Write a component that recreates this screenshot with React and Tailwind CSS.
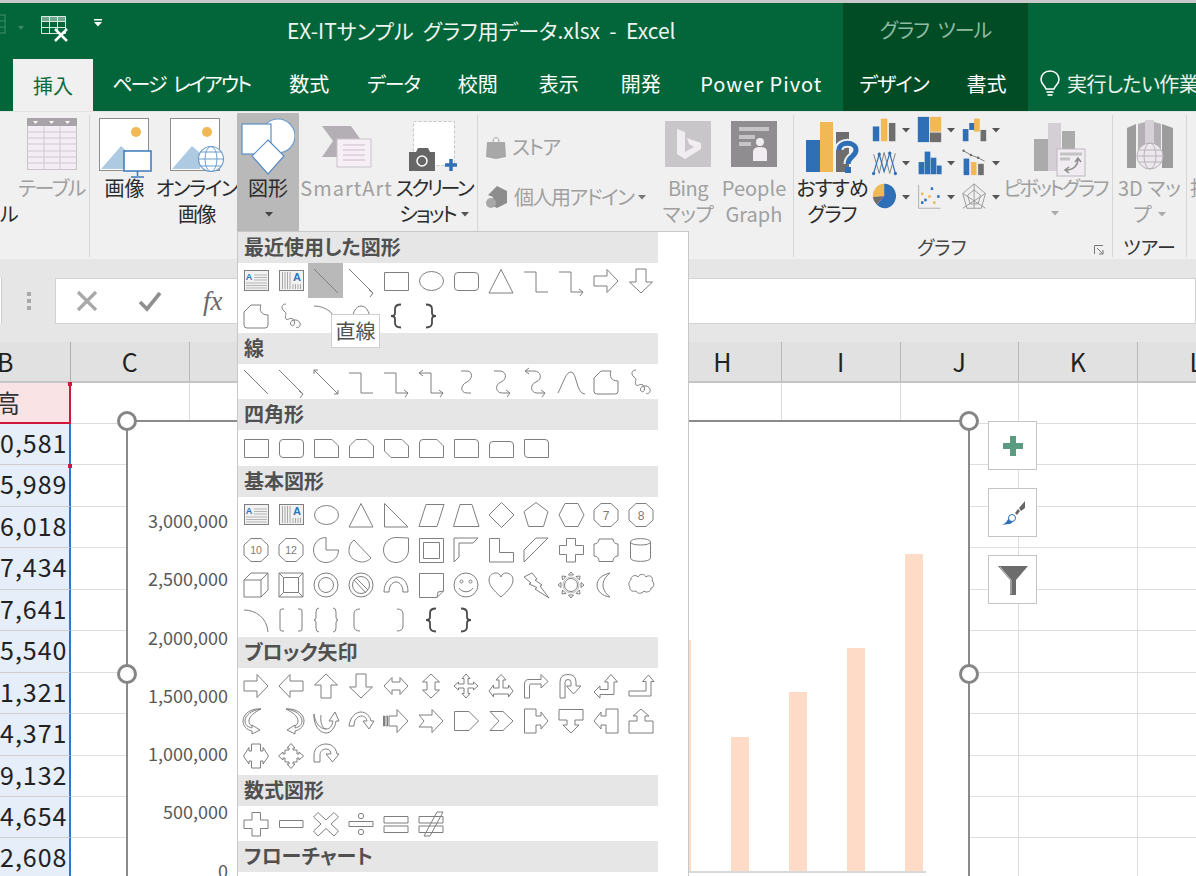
import React from "react";

const S = "#7f7f7f";
const P = (d, extra) => (
  <>
    <path d={d} fill="none" stroke={S} strokeWidth="1" strokeLinejoin="miter" />
    {extra}
  </>
);
const ah = (x, y) => `M${x - 4} ${y - 3}L${x} ${y}L${x - 3} ${y + 4}`;
const T = ({ x = 13, y = 17, s = 11, c = "#7a7a7a", w = 400, ch }) => (
  <text x={x} y={y} fontSize={s} fill={c} fontWeight={w} textAnchor="middle" fontFamily="'Liberation Sans',sans-serif">{ch}</text>
);

const shapes = {
  textH: (
    <>
      <rect x="1.500" y="2.500" width="24" height="20" fill="#f2f2f2" stroke={S} />
      <T x={6} y={12} s={9} c="#2e75c0" w={700} ch="A" />
      <path d="M11 7h13M11 9.500h13M11 12h13M3 15h21M3 17.500h21M3 20h21" stroke="#b5b5b5" fill="none" />
    </>
  ),
  textV: (
    <>
      <rect x="1.500" y="2.500" width="24" height="20" fill="#f2f2f2" stroke={S} />
      <path d="M4.500 4v17M7 4v17M9.500 4v17M12 4v17M15 16v5M17.500 16v5M20 16v5M22.500 16v5" stroke="#a8a8a8" fill="none" />
      <T x={19} y={13} s={11} c="#2e75c0" w={700} ch="A" />
    </>
  ),
  line: P("M1 1L25 25"),
  arrow: P(`M1 1L25 25${ah(25, 25)}`),
  dbl: P("M1 1L25 25M21 25H25V21M1 5V1H5"),
  rect: P("M1.500 4.500H25.500V22.500H1.500Z"),
  ellipse: P("M1.500 13A12 9.500 0 1 0 25.500 13A12 9.500 0 1 0 1.500 13Z"),
  round: P("M5 4.500H22Q25.500 4.500 25.500 8V19Q25.500 22.500 22 22.500H5Q1.500 22.500 1.500 19V8Q1.500 4.500 5 4.500Z"),
  tri: P("M13 1.500L25 25H1Z"),
  elbow: P("M1 4H13V24H25"),
  elbowA: P(`M1 4H13V24H25${ah(25, 24)}`),
  elbowD: P(`M5 1L1 4L5 7M1 4H13V24H25${ah(25, 24)}`),
  curve: P("M8 2H14C20 2 20 10 14 13C7 16 7 24 14 24H18"),
  curveA: P(`M6 2H12C18 2 20 10 13 13C6 16 8 24 14 24H22${ah(22, 24)}`),
  curveD: P(`M6 -1L2 2L6 5M2 2H11C18 2 20 10 13 13C6 16 8 24 14 24H22${ah(22, 24)}`),
  bez: P("M0 24C6 12 8 3 13 3C19 3 18 25 27 25"),
  free: P("M1 9L8 2H18C16 7 18 12 25 12V22Q25 25 22 25H4Q1 25 1 22Z"),
  scrib: P("M8 1C3 1 3 6 6 8C10 10 6 13 8 16C9 18 12 14 15 16C18 19 16 25 13 22C10 18 19 14 22 20C23 23 20 26 18 24"),
  arc: P("M1 3C13 3 24 11 25 25"),
  arch: P("M4 24C3 10 8 3 13 3C19 3 23 10 22 24"),
  snip1: P("M1.500 4.500H19L25.500 11V22.500H1.500Z"),
  snip2: P("M8 4.500H19L25.500 11V22.500H1.500V11Z"),
  snipD: P("M1.500 4.500H19L25.500 11V22.500H8L1.500 16Z"),
  rsnip: P("M5 4.500H19L25.500 11V22.500H1.500V8Q1.500 4.500 5 4.500Z"),
  round1: P("M1.500 4.500H22Q25.500 4.500 25.500 8V22.500H1.500Z"),
  round2: P("M5 6.500H22Q25.500 6.500 25.500 10V22.500H1.500V10Q1.500 6.500 5 6.500Z"),
  roundD: P("M1.500 4.500H22Q25.500 4.500 25.500 8V22.500H5Q1.500 22.500 1.500 19Z"),
  rtri: P("M1.500 1.500V25H25Z"),
  para: P("M1 24.500L8 2.500H26L19 24.500Z"),
  trap: P("M7 2.500H19L26 24.500H0.500Z"),
  dia: P("M13.500 0.500L26 13L13.500 25.500L1 13Z"),
  pent: P("M13 0.500L25 9.500L20.500 24.500H5.500L1 9.500Z"),
  hex: P("M7 1.500H20L26 13L20 24.500H7L1 13Z"),
  hept: P("M8 1.500H18L25 8V18L18 24.500H8L1 18V8Z", <T y={17.500} s={12} ch="7" />),
  oct: P("M8 1.500H18L25 8V18L18 24.500H8L1 18V8Z", <T y={17.500} s={12} ch="8" />),
  dec: P("M8 1.500H18L25 8V18L18 24.500H8L1 18V8Z", <T y={17} s={10.500} ch="10" />),
  dodec: P("M8 1.500H18L25 8V18L18 24.500H8L1 18V8Z", <T y={17} s={10.500} ch="12" />),
  pie: P("M13 13H25.500C25.500 21 19 25.500 13 25.500C6 25.500 0.500 20 0.500 13C0.500 6 6 0.500 13 0.500Z"),
  chord: P("M6 3L23 21C19 25 14 26 9 24C3 22 0.500 17 1 13C1 9 3 5 6 3Z"),
  tear: P("M25.500 1V13C25.500 20 19.500 25.500 13 25.500C6 25.500 0.500 20 0.500 13C0.500 6 6 0.500 13 0.500Z"),
  frame: P("M1.500 1.500H25.500V25.500H1.500ZM5.500 5.500H21.500V21.500H5.500Z"),
  half: P("M1 1H25L20 6H6V20L1 25Z"),
  lshape: P("M1.500 1.500H11.500V15.500H25.500V25H1.500Z"),
  diag: P("M1 25V13L13 1H25Z"),
  cross: P("M8.500 1.500H17.500V8.500H25.500V17.500H17.500V25H8.500V17.500H1.500V8.500H8.500Z"),
  plaque: P("M6 2H20C20 5 22 7 25 7V19C22 19 20 21 20 24.500H6C6 21 4 19 1 19V7C4 7 6 5 6 2Z"),
  can: P("M2.500 5C2.500 0.500 22.500 0.500 22.500 5V21C22.500 25.500 2.500 25.500 2.500 21ZM2.500 5C2.500 9 22.500 9 22.500 5"),
  cube: P("M1 8L8 1H25V18L18 25H1ZM1 8H18V25M18 8L25 1"),
  bevel: P("M1 1H25V25H1ZM5.500 5.500H20.500V20.500H5.500ZM1 1L5.500 5.500M25 1L20.500 5.500M1 25L5.500 20.500M25 25L20.500 20.500"),
  donut: (
    <>
      <circle cx="13" cy="13" r="12" fill="none" stroke={S} />
      <circle cx="13" cy="13" r="7.500" fill="none" stroke={S} />
    </>
  ),
  no: (
    <>
      <circle cx="13" cy="13" r="12" fill="none" stroke={S} />
      <circle cx="13" cy="13" r="8.500" fill="none" stroke={S} />
      <path d="M6 8L18 21M8 6L20 18" stroke={S} fill="none" />
    </>
  ),
  barc: P("M1 20C1 10 7 5 13 5C20 5 25 10 25 20H20C20 14 17 10 13 10C9 10 6 14 6 20Z"),
  fold: P("M1.500 1.500H25.500V19L19 25.500H1.500ZM19 25.500L20 20L25.500 19"),
  smile: (
    <>
      <circle cx="13" cy="13" r="12" fill="none" stroke={S} />
      <circle cx="8.500" cy="9.500" r="1.500" fill="none" stroke={S} />
      <circle cx="17.500" cy="9.500" r="1.500" fill="none" stroke={S} />
      <path d="M6 16C9 21 17 21 20 16" fill="none" stroke={S} />
    </>
  ),
  heart: P("M13 25C5 18 1 13 1 8C1 3 5 1 8 1C10 1 12 2 13 5C14 2 16 1 18 1C21 1 25 3 25 8C25 13 21 18 13 25Z"),
  bolt: P("M1 5L9 1L14 7L12 8L19 13L17 14L26 26L12 17L14 15.500L6 12L8 11Z"),
  sun: (
    <>
      <circle cx="13" cy="13" r="6.500" fill="none" stroke={S} />
      <circle cx="13" cy="13" r="8" fill="none" stroke="#bdbdbd" />
      <path d="M13 0L15.500 3H10.500ZM13 26L15.500 23H10.500ZM0 13L3 10.500V15.500ZM26 13L23 10.500V15.500ZM4 4L8 4.500L4.500 8ZM22 4L18 4.500L21.500 8ZM4 22L8 21.500L4.500 18ZM22 22L18 21.500L21.500 18Z" fill="none" stroke={S} />
    </>
  ),
  moon: P("M17 1C8 3 4 8 4 13C4 19 9 24 17 25C12 21 10 17 10 13C10 9 12 5 17 1Z"),
  cloud: P("M3 8C2 4 8 2 10 5C12 1 17 2 18 5C21 2 26 5 24 9C27 11 26 16 23 16C23 20 18 21 16 19C14 22 9 22 8 19C4 20 1 18 2 15C0 13 1 9 3 8Z"),
  brackP: P("M6 2H4Q2 2 2 4V22Q2 24 4 24H6M20 2H22Q24 2 24 4V22Q24 24 22 24H20"),
  braceP: P("M6 1Q3 1 3 5V10Q3 13 1 13Q3 13 3 16V21Q3 25 6 25M20 1Q23 1 23 5V10Q23 13 25 13Q23 13 23 16V21Q23 25 20 25"),
  brackL: P("M12 2Q6 2 6 7V19Q6 24 12 24"),
  brackR: P("M14 2Q20 2 20 7V19Q20 24 14 24"),
  braceL: <path d="M18 1.500Q12 1.500 12 6V10Q12 13 8 13Q12 13 12 16V20Q12 24.500 18 24.500" fill="none" stroke="#4a4a4a" strokeWidth="1.800" />,
  braceR: <path d="M8 1.500Q14 1.500 14 6V10Q14 13 18 13Q14 13 14 16V20Q14 24.500 8 24.500" fill="none" stroke="#4a4a4a" strokeWidth="1.800" />,
  aR: P("M1 8H14V1.500L25 13L14 24.500V18H1Z"),
  aL: P("M25 8H12V1.500L1 13L12 24.500V18H25Z"),
  aU: P("M8 25V12H1.500L13 1L24.500 12H18V25Z"),
  aD: P("M8 1V14H1.500L13 25L24.500 14H18V1Z"),
  aLR: P("M1 13L9 4.500V9H17V4.500L25 13L17 21.500V17H9V21.500Z"),
  aUD: P("M13 1L21.500 9H17V17H21.500L13 25L4.500 17H9V9H4.500Z"),
  aQ: P("M13 1L17 5.500H15V11H20.500V9L25 13L20.500 17V15H15V20.500H17L13 25L9 20.500H11V15H5.500V17L1 13L5.500 9V11H11V5.500H9Z"),
  aLRU: P("M13 1.500L18 7H15V15H20.500V12L25 18L20.500 24V21H5.500V24L1 18L5.500 12V15H11V7H8Z"),
  aBent: P("M1.500 25V11Q1.500 6.500 6 6.500H18V1.500L25 8.500L18 15V11H8Q6.500 11 6.500 12.500V25Z"),
  aU2: P("M2 25V9Q2 1.500 10 1.500Q18 1.500 18 9V13H23L15.500 21L8.500 13H13V9.500Q13 6.500 10 6.500Q7 6.500 7 9.500V25Z"),
  aLU: P("M1 19L7 13V16.500H15V9H11.500L18 1.500L24.500 9H21V21.500H7V25Z"),
  aBU: P("M1 18H18V8.500H14.500L20.500 2L26 8.500H23V23H1Z"),
  cL: P("M18 1C9 2 2 7 2 13C2 17 5 19 9 20V17L17 22L9 26V23C4 22 0 18 0 13C0 6 8 0 18 1ZM18 1C12 4 6 8 6 13C6 15 7 17 9 18"),
  cR: P("M8 1C17 2 24 7 24 13C24 17 21 19 17 20V17L9 22L17 26V23C22 22 26 18 26 13C26 6 18 0 8 1ZM8 1C14 4 20 8 20 13C20 15 19 17 17 18"),
  cU: P("M1 6C2 15 7 21 13 21C17 21 19 18 20 13H16L22 4L26 13H23C22 20 18 25 13 25C6 25 0 16 1 6ZM13 21C9 20 7 14 8 7"),
  cD: P("M1 18C2 9 8 4 13 4C18 4 22 8 23 13H26L21 21L15 13H19C18 9 16 8 14 8C9 8 6 12 6 18Z"),
  stripe: P("M0.500 8H1.500V18H0.500ZM3 8H4.500V18H3ZM6 8H14V1.500L25 13L14 24.500V18H6Z"),
  notch: P("M1 7H14V1.500L25 13L14 24.500V19H1L6 13Z"),
  home: P("M1.500 3.500H16L25.500 13L16 22.500H1.500Z"),
  chev: P("M2 3.500H15L25 13L15 22.500H2L11 13Z"),
  coR: P("M1.500 1H13V8H18V4L25 13L18 21V17H13V25H1.500Z"),
  coD: P("M1 1.500H25V12H17V17H21L13 25L5 17H9V12H1Z"),
  coL: P("M25 1V25H13V17H8V21L1 13L8 4V8H13V1Z"),
  coU: P("M1 25V13H9V8H5L13 1L21 8H17V13H25V25Z"),
  coLR: P("M8.500 1H17.500V8H20V4.500L25.500 13L20 21V18H17.500V25H8.500V18H6V21L0.500 13L6 4.500V8H8.500Z"),
  coQ: P("M13 0.500L17 5H15V7H19V11H21V9L25.500 13L21 17V15H19V19H15V21H17L13 25.500L9 21H11V19H7V15H5V17L0.500 13L5 9V11H7V7H11V5H9Z"),
  cArr: P("M1 19V12C1 5 7 1 13 1C19 1 23 5 24 11H26L19.500 19L13 11H18C18 8 16 6 13 6C10 6 7 8 7 12V19Z"),
  mP: P("M9 1.500H17.500V9H25V17.500H17.500V25H9V17.500H1V9H9Z"),
  mM: P("M1.500 9.500H25V16.500H1.500Z"),
  mX: P("M5 1.500L13 9L21 1.500L25.500 6L18 13L25.500 20L21 25L13 17.500L5 25L0.500 20L8 13L0.500 6Z"),
  mD: (
    <>
      <path d="M1 10.500H25V15.500H1Z" fill="none" stroke={S} />
      <circle cx="13" cy="5" r="2.700" fill="none" stroke={S} />
      <circle cx="13" cy="21" r="2.700" fill="none" stroke={S} />
    </>
  ),
  mE: P("M1 5.500H25V12H1ZM1 15H25V21.500H1Z"),
  mN: P("M1 5.500H25V12H1ZM1 15H25V21.500H1ZM6 25L19 1H25L12 25Z"),
};

const Shape = ({ n, sel }) => (
  <div className={sel ? "w-[35px] h-[35px] flex items-center justify-center bg-[#b9b9b9]" : "w-[35px] h-[35px] flex items-center justify-center"}>
    <svg width="26" height="26" viewBox="0 0 26 26" className="overflow-visible">{shapes[n]}</svg>
  </div>
);

const sections = [
  ["最近使用した図形", "textH textV line arrow rect ellipse round tri elbow elbowA aR aD free scrib arc arch braceL braceR", ""],
  ["線", "line arrow dbl elbow elbowA elbowD curve curveA curveD bez free scrib", ""],
  ["四角形", "rect round snip1 snip2 snipD rsnip round1 round2 roundD", "pb-px"],
  ["基本図形", "textH textV ellipse tri rtri para trap dia pent hex hept oct dec dodec pie chord tear frame half lshape diag cross plaque can cube bevel donut no barc fold smile heart bolt sun moon cloud arc brackP braceP brackL brackR braceL braceR", ""],
  ["ブロック矢印", "aR aL aU aD aLR aUD aQ aLRU aBent aU2 aLU aBU cL cR cU cD stripe notch home chev coR coD coL coU coLR coQ cArr", "pb-[2px]"],
  ["数式図形", "mP mM mX mD mE mN", ""],
  ["フローチャート", "", ""],
];

const ShapesMenu = () => (
  <div className="absolute left-[237px] top-[231px] w-[452px] h-[660px] bg-white border-l border-t border-r border-[#c8c8c8]">
    {sections.map(([title, list, pad], i) => (
      <div key={i} className={pad}>
        <div className="w-[420px] h-[31px] bg-[#e6e6e6] pl-[6px] text-[20px] leading-[29px] font-bold text-[#505050]">{title}</div>
        {list && (
          <div className="flex flex-wrap w-[420px]">
            {list.split(" ").map((n, j) => (
              <Shape key={j} n={n} sel={i === 0 && j === 2} />
            ))}
          </div>
        )}
      </div>
    ))}
  </div>
);

const Tab = ({ w, children, cls }) => (
  <div className={`flex items-center justify-center whitespace-nowrap shrink-0 ${cls || "h-full"}`} style={{ width: w }}>{children}</div>
);

const Header = () => (
  <div className="bg-[#03663a] text-white h-[108px] flex flex-col shrink-0">
    <div className="flex h-[54px]">
      <div className="w-[843px] flex items-center relative">
        <svg width="6" height="24" viewBox="0 0 6 24" className="mt-[-8px]">
          <path d="M0 1H6M0 7H6M0 13H6M0 19H6M5 1V19" stroke="#3c8a63" fill="none" />
        </svg>
        <svg width="6" height="4" viewBox="0 0 6 4" className="ml-[12px] mt-[-4px]"><path d="M0 0H6L3 4Z" fill="#3c8a63" /></svg>
        <svg width="34" height="30" viewBox="0 0 34 30" className="ml-[16px] mt-[-4px]">
          <path d="M1.500 3.500H25.500V20.500H1.500ZM1.500 8.500H25.500M1.500 14.500H25.500M9.500 3.500V20.500M17.500 3.500V20.500" stroke="#d8e8df" fill="none" />
          <rect x="1" y="3" width="25" height="5" fill="#d8e8df" opacity="0.5" />
          <path d="M15 16L27 28M27 16L15 28" stroke="#fff" strokeWidth="2.500" fill="none" />
        </svg>
        <svg width="10" height="10" viewBox="0 0 10 10" className="ml-[19px] mt-[-14px]">
          <path d="M1 1H9V2.500H1ZM1 4H9L5 8.500Z" fill="#fff" />
        </svg>
        <div className="absolute left-[287px] top-[13px] text-[21px] leading-[28px] whitespace-pre text-[#eef5f1]">EX-ITサンプル  グラフ用データ.xlsx  -  Excel</div>
      </div>
      <div className="w-[185px] bg-[#014b25] flex items-center justify-center text-[20px] text-[#8fbba3] tracking-[-1px] [word-spacing:5px]">グラフ ツール</div>
    </div>
    <div className="flex h-[54px] text-[20px]">
      <div className="w-[843px] flex shrink-0">
        <div className="w-[13px] shrink-0" />
        <Tab w="80px" cls="bg-[#f0f0f0] text-[#0c6a3d] mt-[2px] h-[53px]">挿入</Tab>
        <Tab w="176.500px"><span className="tracking-[-2px] [word-spacing:5px]">ページ レイアウト</span></Tab>
        <Tab w="79.500px">数式</Tab>
        <Tab w="89px"><span className="tracking-[-1px]">データ</span></Tab>
        <Tab w="79.500px">校閲</Tab>
        <Tab w="82.500px">表示</Tab>
        <Tab w="81.500px">開発</Tab>
        <Tab w="159.500px"><span className="tracking-[1px]">Power Pivot</span></Tab>
      </div>
      <div className="w-[185px] bg-[#014b25] flex shrink-0">
        <Tab w="102px"><span className="tracking-[-1px]">デザイン</span></Tab>
        <Tab w="83px">書式</Tab>
      </div>
      <div className="flex items-center pl-[11px] whitespace-nowrap gap-[6px]">
        <svg width="22" height="30" viewBox="0 0 22 30" className="shrink-0">
          <path d="M11 2C5.500 2 2 6 2 10.500C2 15 6 16.500 7 20H15C16 16.500 20 15 20 10.500C20 6 16.500 2 11 2Z" fill="none" stroke="#fff" strokeWidth="1.500" />
          <path d="M7.500 23H14.500M8.500 26H13.500" stroke="#cfe2d8" strokeWidth="2" />
        </svg>
        <span className="text-[#e8f2ec] tracking-[-0.500px]">実行したい作業を入力</span>
      </div>
    </div>
  </div>
);

const Caret = ({ c = "#555", cls = "" }) => (
  <svg width="8" height="5" viewBox="0 0 8 5" className={`shrink-0 ${cls}`}><path d="M0 0H8L4 4.500Z" fill={c} /></svg>
);

const Tbl = () => (
  <svg width="50" height="52" viewBox="0 0 50 52">
    <rect x="0.500" y="0.500" width="49" height="51" fill="#f5edf5" stroke="#c9c3c9" />
    <rect x="0" y="0" width="50" height="8" fill="#a8a3a8" />
    <path d="M6 3H11L8.500 6ZM22 3H27L24.500 6ZM38 3H43L40.500 6Z" fill="#fff" />
    <path d="M0 14H50M0 20H50M0 26H50M0 33H50M0 39H50M0 45H50M17 8V52M33 8V52" stroke="#cfc8cf" fill="none" />
  </svg>
);
const Pic = ({ over }) => (
  <svg width="54" height="60" viewBox="0 0 54 60">
    <rect x="0.500" y="0.500" width="49" height="52" fill="#fff" stroke="#8c8c8c" />
    <circle cx="37" cy="14" r="5" fill="#f0b955" />
    <path d="M2 51L22 28L30 35V51Z" fill="#aecae3" />
    {over === "monitor" ? (
      <>
        <rect x="25" y="33" width="27" height="20" fill="#fff" stroke="#3b78b8" strokeWidth="1.500" />
        <path d="M38.500 53V58M32 59H45" stroke="#3b78b8" strokeWidth="1.500" />
      </>
    ) : (
      <>
        <circle cx="41" cy="41" r="12.500" fill="#fff" stroke="#6b9dce" strokeWidth="1.200" />
        <ellipse cx="41" cy="41" rx="6" ry="12.500" fill="none" stroke="#6b9dce" />
        <path d="M28.500 41H53.500M30 34H52M30 48H52" stroke="#6b9dce" />
      </>
    )}
  </svg>
);
const ShapesIcon = () => (
  <svg width="54" height="58" viewBox="0 0 54 58">
    <circle cx="37" cy="18" r="17" fill="#fff" stroke="#6b9dce" strokeWidth="1.200" />
    <rect x="1" y="6" width="29" height="30" fill="#fff" stroke="#5b8fc4" strokeWidth="1.200" />
    <path d="M27 22L43 38L27 56L11 38Z" fill="#fff" stroke="#5b8fc4" strokeWidth="1.200" />
  </svg>
);
const SmartArt = () => (
  <svg width="52" height="44" viewBox="0 0 52 44">
    <path d="M1 1H30L42 18L36 32H1L12 16Z" fill="#b4afb4" />
    <rect x="16" y="14" width="34" height="28" fill="#f6eff6" stroke="#c9c3c9" />
    <path d="M22 20H44M22 25H44M22 30H44M22 35H44" stroke="#cbbccb" />
  </svg>
);
const Screenshot = () => (
  <svg width="50" height="52" viewBox="0 0 50 52">
    <rect x="4.500" y="0.500" width="41" height="44" fill="#fff" stroke="#c5c5c5" strokeDasharray="3 2" />
    <path d="M0 31H7L9 27H19L21 31H26V50H0Z" fill="#666" />
    <circle cx="13" cy="40" r="5" fill="#666" stroke="#fff" strokeWidth="1.500" />
    <path d="M36 44H48M42 38V50" stroke="#2e6fb5" strokeWidth="3.500" />
  </svg>
);

const Item = ({ w, icon, label, gray, cls = "", iconCls = "", track = "" }) => (
  <div className={`flex flex-col items-center h-[118px] shrink-0 ${cls}`} style={{ width: w }}>
    <div className={`h-[62px] flex justify-center items-start pt-[5px] ${iconCls}`}>{icon}</div>
    <div className={`text-[20px] leading-[26px] text-center whitespace-nowrap ${track} ${gray ? "text-[#a0a0a0]" : "text-[#2b2b2b]"}`}>
      {label.map((l, i) => <div key={i}>{l}</div>)}
    </div>
  </div>
);

const MiniChart = ({ k }) => {
  const B = "#2e6fb5", Y = "#f0b955", G = "#6e6e6e";
  const m = {
    col: <><rect x="1" y="12" width="8" height="17" fill={B} /><rect x="11" y="3" width="8" height="26" fill={Y} /><rect x="21" y="8" width="8" height="21" fill={G} /></>,
    tree: <><rect x="1" y="1" width="14" height="29" fill={B} /><rect x="16" y="1" width="14" height="17" fill={Y} /><rect x="16" y="19" width="14" height="11" fill={G} /></>,
    water: <><rect x="1" y="15" width="7" height="14" fill={B} /><rect x="9" y="8" width="7" height="8" fill={B} /><rect x="15" y="3" width="7" height="15" fill={Y} /><rect x="23" y="16" width="7" height="13" fill={G} /></>,
    line: <><path d="M2 6L9 28L15 4L22 28L29 5" stroke={G} fill="none" /><path d="M2 28L9 6L15 26L22 5L29 28" stroke={B} fill="none" strokeWidth="1.500" /><circle cx="2" cy="28" r="2" fill={B} /><circle cx="9" cy="6" r="2" fill={B} /><circle cx="22" cy="5" r="2" fill={B} /><circle cx="29" cy="28" r="2" fill={B} /></>,
    hist: <><rect x="2" y="15" width="7" height="14" fill={B} /><rect x="9.500" y="3" width="7" height="26" fill={B} /><rect x="17" y="10" width="7" height="19" fill={B} /><rect x="24.500" y="19" width="6" height="10" fill={B} /></>,
    combo: <><rect x="2" y="11" width="7" height="19" fill={B} /><rect x="11" y="15" width="7" height="15" fill={Y} /><rect x="20" y="17" width="7" height="13" fill={G} /><path d="M2 2L11 7L20 10L28 14" stroke={G} fill="none" /><circle cx="2" cy="2" r="1.500" fill={G} /><circle cx="11" cy="7" r="1.500" fill={G} /><circle cx="20" cy="10" r="1.500" fill={G} /></>,
    pie: <><path d="M15 15V1A14 14 0 1 1 6 25Z" fill={B} /><path d="M15 15L1 16A14 14 0 0 1 15 1Z" fill={Y} /><path d="M15 15L6 25A14 14 0 0 1 1 16Z" fill={G} /></>,
    scatter: <><path d="M2 2V29H29" stroke="#a8a8a8" fill="none" /><rect x="5" y="11" width="3" height="3" fill={Y} /><rect x="9" y="18" width="3" height="3" fill={B} /><rect x="14" y="14" width="3" height="3" fill={Y} /><rect x="17" y="5" width="3" height="3" fill={B} /><rect x="20" y="21" width="3" height="3" fill={Y} /><rect x="25" y="14" width="3" height="3" fill={B} /><rect x="5" y="21" width="3" height="3" fill={B} /></>,
    radar: <><path d="M15 1L29 12L24 29H6L1 12ZM15 8L23 14L20 24H10L7 14ZM15 1V29M1 12L29 29M29 12L1 29" stroke="#8e8e8e" fill="none" /></>,
  };
  return (
    <div className="flex items-center gap-[5px] h-[33px]">
      <svg width="25" height="27" viewBox="0 0 31 31" preserveAspectRatio="none">{m[k]}</svg>
      <Caret cls="mt-[2px]" />
    </div>
  );
};

const Sep = () => <div className="w-px bg-[#d6d6d6] h-[142px] mt-[2px] shrink-0" />;

const Ribbon = () => (
  <div className="h-[148px] bg-[#f0f0f0] flex pt-[1px] border-t border-[#e2e2e2] shrink-0">
    <div className="w-[89px] relative shrink-0">
      <Item w="89px" gray icon={<Tbl />} label={["テーブル"]} cls="pl-[14px]" track="tracking-[-1.500px]" />
      <div className="absolute left-0 top-[88px] text-[20px] leading-[26px] text-[#2b2b2b]">ル</div>
    </div>
    <Sep />
    <div className="w-[387px] flex shrink-0">
      <Item w="69px" icon={<Pic over="monitor" />} label={["画像"]} iconCls="pl-[2px]" />
      <Item w="78px" icon={<Pic over="globe" />} label={["オンライン", "画像"]} cls="pr-[3px]" track="tracking-[-1.500px]" />
      <Item w="62px" icon={<ShapesIcon />} label={["図形"]} cls="bg-[#b9b9b9]" iconCls="pt-[3px]" />
      <div className="relative w-0">
        <Caret c="#444" cls="absolute left-[-34px] top-[99px]" />
      </div>
      <Item w="93px" gray icon={<SmartArt />} label={["SmartArt"]} cls="pl-[2px]" iconCls="pt-[12px]" track="tracking-[1px]" />
      <div className="w-[84px] flex flex-col items-center h-[118px] shrink-0">
        <div className="h-[62px] pt-[8px]"><Screenshot /></div>
        <div className="text-[20px] leading-[26px] whitespace-nowrap text-[#2b2b2b] tracking-[-2.500px]">スクリーン</div>
        <div className="text-[20px] leading-[26px] whitespace-nowrap text-[#2b2b2b] flex items-center gap-[5px] tracking-[-2px]">ショット <Caret /></div>
      </div>
    </div>
    <Sep />
    <div className="w-[315px] flex shrink-0">
      <div className="w-[181px] shrink-0 pl-[7px] pt-[16px] text-[20px] text-[#a0a0a0] tracking-[-1.500px]">
        <div className="flex items-center gap-[5px] h-[36px]">
          <svg width="22" height="24" viewBox="0 0 22 24"><path d="M2 7H20L21 22L11 24L1 22Z" fill="#a8a8a8" /><path d="M8 7C8 1 14 1 14 7" fill="none" stroke="#a8a8a8" /></svg>
          <span>ストア</span>
        </div>
        <div className="flex items-center gap-[5px] mt-[14px] h-[36px] whitespace-nowrap">
          <svg width="24" height="24" viewBox="0 0 24 24"><path d="M12 1L22 6V18L12 23L8 21V12L3 10L12 1Z" fill="#8d8d8d" /><circle cx="6" cy="18" r="5" fill="#a8a8a8" /></svg>
          <span>個人用アドイン</span>
          <Caret c="#777" />
        </div>
      </div>
      <Item w="58px" gray icon={
        <svg width="46" height="46" viewBox="0 0 46 46"><rect width="46" height="46" fill="#c9c6c9" /><path d="M12 8L20 11V31L29 26L24 23L22 17L36 22V28L20 38L12 33Z" fill="#f1ecf1" /></svg>
      } label={["Bing", "マップ"]} iconCls="pt-[8px]" track="tracking-[-0.500px]" />
      <Item w="62px" gray icon={
        <svg width="46" height="46" viewBox="0 0 46 46"><rect width="46" height="46" fill="#8f8d8f" /><path d="M8 8H38M8 16H24M8 23H20" stroke="#c7c4c7" strokeWidth="4" /><circle cx="29" cy="21" r="4" fill="#f1ecf1" /><path d="M22 40V31Q22 26 29 26Q36 26 36 31V40Z" fill="#f1ecf1" /></svg>
      } label={["People", "Graph"]} cls="ml-[6px]" iconCls="pt-[8px]" />
    </div>
    <Sep />
    <div className="w-[318px] shrink-0 relative flex">
      <Item w="76px" icon={
        <svg width="54" height="54" viewBox="0 0 54 54">
          <rect x="0" y="18" width="14" height="32" fill="#2e6fb5" />
          <rect x="14" y="0" width="13" height="50" fill="#f0b955" />
          <rect x="30" y="10" width="13" height="40" fill="#6e6e6e" />
          <path d="M33 28C33 19 50 19 50 28C50 35 42 34 42 42" fill="none" stroke="#f0f0f0" strokeWidth="9" />
          <path d="M33 28C33 19 50 19 50 28C50 35 42 34 42 42" fill="none" stroke="#2e6fb5" strokeWidth="5" />
          <rect x="39" y="45" width="6" height="6" fill="#2e6fb5" />
        </svg>
      } label={["おすすめ", "グラフ"]} iconCls="pt-[9px] pl-[2px]" track="tracking-[-1px]" />
      <div className="grid grid-cols-[45px_45px_45px] h-[100px] ml-[2px] shrink-0">
        {["col", "tree", "water", "line", "hist", "combo", "pie", "scatter", "radar"].map((k) => <MiniChart key={k} k={k} />)}
      </div>
      <div className="flex flex-col items-center w-[106px] ml-[-5px] shrink-0">
        <div className="h-[62px] pt-[8px] pl-[10px]">
          <svg width="52" height="56" viewBox="0 0 52 56">
            <rect x="0" y="18" width="14" height="32" fill="#ababab" />
            <rect x="14" y="2" width="13" height="48" fill="#d4cfd4" />
            <rect x="28" y="10" width="13" height="40" fill="#ababab" />
            <rect x="23" y="28" width="28" height="27" fill="#f1ecf1" stroke="#bdb8bd" />
            <path d="M26 33H48M26 38H36" stroke="#c2c2c2" strokeWidth="3" />
            <path d="M32 49C40 49 44 44 44 38M41 41L44 37L47 41M35 46L31 49L35 52" fill="none" stroke="#8d8d8d" strokeWidth="1.500" />
          </svg>
        </div>
        <div className="text-[20px] leading-[26px] whitespace-nowrap text-[#a0a0a0] tracking-[-2.500px]">ピボットグラフ</div>
        <Caret c="#aaa" cls="mt-[10px]" />
      </div>
      <div className="absolute left-[123px] bottom-[-1px] text-[19px] leading-[26px] text-[#444]">グラフ</div>
      <svg width="10" height="10" viewBox="0 0 10 10" className="absolute left-[300px] bottom-[4px]">
        <path d="M0.500 9V0.500H9M3 3L9 9M5 9H9V5" stroke="#777" fill="none" />
      </svg>
    </div>
    <Sep />
    <div className="w-[73px] shrink-0 relative flex flex-col items-center">
      <div className="h-[62px] pt-[7px]">
        <svg width="46" height="50" viewBox="0 0 46 50">
          <path d="M0 8L9 4V48H0ZM35 4L46 8V48H35Z" fill="#9c9c9c" />
          <path d="M11 4L18 2V40H11ZM27 2L34 4V40H27Z" fill="#b4afb4" />
          <path d="M18 0H27V34H18Z" fill="#d6d1d6" />
          <circle cx="23" cy="36" r="13" fill="#ece7ec" stroke="#b8b3b8" />
          <ellipse cx="23" cy="36" rx="6" ry="13" fill="none" stroke="#b8b3b8" />
          <path d="M10 36H36M12 30H34M12 42H34" stroke="#b8b3b8" />
        </svg>
      </div>
      <div className="text-[20px] leading-[26px] whitespace-nowrap text-[#a0a0a0]">3D マッ</div>
      <div className="text-[20px] leading-[26px] whitespace-nowrap text-[#a0a0a0] flex items-center gap-[6px]">プ <Caret c="#aaa" /></div>
      <div className="absolute bottom-[-1px] text-[19px] leading-[26px] text-[#333]">ツアー</div>
    </div>
    <Sep />
    <div className="text-[20px] leading-[26px] text-[#a0a0a0] pl-[3px] pt-[62px] whitespace-nowrap overflow-hidden">折れ線</div>
  </div>
);

const FormulaBar = () => (
  <div className="h-[83px] bg-[#e6e6e6] flex pt-[19px] shrink-0">
    <div className="w-[2px] h-[46px] bg-white border-r border-[#cdcdcd] shrink-0" />
    <div className="w-[53px] flex justify-center shrink-0">
      <svg width="6" height="20" viewBox="0 0 6 20" className="mt-[13px]"><path d="M1 1h4v4H1zM1 8h4v4H1zM1 15h4v4H1z" fill="#a8a8a8" /></svg>
    </div>
    <div className="flex-1 h-[46px] bg-white border border-[#d2d2d2] flex items-center relative">
      <svg width="22" height="22" viewBox="0 0 22 22" className="ml-[20px]"><path d="M2 2L20 20M20 2L2 20" stroke="#a8a8a8" strokeWidth="3.200" /></svg>
      <svg width="24" height="22" viewBox="0 0 24 22" className="ml-[40px]"><path d="M2 12L9 19L22 3" stroke="#8f8f8f" strokeWidth="3.600" fill="none" /></svg>
      <span className="ml-[41px] text-[27px] leading-none italic text-[#6a6a6a] [font-family:'Liberation_Serif',serif]">fx</span>
    </div>
  </div>
);

const COLS = ["C", "D", "E", "F", "G", "H", "I", "J", "K", "L"];
const VALS = ["0,581", "5,989", "6,018", "7,434", "7,641", "5,540", "1,321", "4,371", "9,132", "4,654", "2,608"];

const Sheet = () => (
  <div className="relative shrink-0">
    <div className="flex h-[41px] bg-[#e1e1e1] border-b-2 border-[#c4c4c4] text-[25px] text-[#222]">
      <div className="w-[71px] shrink-0 border-r border-[#aeaeae] leading-[38px] overflow-hidden"><span className="block ml-[-3px]">B</span></div>
      {COLS.map((c) => (
        <div key={c} className="w-[118.500px] shrink-0 border-r border-[#b8b8b8] text-center leading-[38px]">{c}</div>
      ))}
    </div>
    <div className="flex h-[41px]">
      <div className="w-[71px] shrink-0 bg-[#fae3e5] border-r-2 border-b-2 border-[#d0183f] text-[25px] leading-[38px] text-[#333] overflow-hidden">
        <span className="ml-[-5px] block">高</span>
      </div>
      {COLS.map((c) => <div key={c} className="w-[118.500px] shrink-0 border-r border-b border-[#dcdcdc]" />)}
    </div>
    {VALS.map((v) => (
      <div key={v} className="flex h-[41.450px]">
        <div className="w-[71px] shrink-0 bg-[#e6eefa] border-r-2 border-r-[#2f76d2] border-b border-b-[#cfcfcf] text-right pr-[6px] text-[25px] leading-[36px] text-[#222] tracking-[1px] overflow-hidden">{v}</div>
        {COLS.map((c) => <div key={c} className="w-[118.500px] shrink-0 border-r border-b border-[#dedede]" />)}
      </div>
    ))}
    <div className="absolute left-[68px] top-[40px] w-[4px] h-[4px] bg-[#d0183f]" />
    <div className="absolute left-[68px] top-[122px] w-[4px] h-[4px] bg-[#d0183f]" />

    <div className="absolute left-[126px] top-[78px] w-[844px] h-[520px] bg-white border-2 border-[#8a8a8a]">
      <div className="absolute right-[740px] top-[83px] flex flex-col items-end text-[#595959] text-[18px]">
        {["3,000,000", "2,500,000", "2,000,000", "1,500,000", "1,000,000", "500,000", "0"].map((l) => (
          <div key={l} className="h-[58.300px] leading-[30px] whitespace-nowrap">{l}</div>
        ))}
      </div>
      <div className="absolute left-[545px] top-0 h-[450px] flex items-end gap-[40px]">
        {[232, 135, 180, 224, 318].map((h, i) => (
          <div key={i} className="w-[18px] bg-[#fddbc7]" style={{ height: h }} />
        ))}
      </div>
      <div className="absolute left-[520px] top-[449px] w-[278px] h-[2px] bg-[#d9d9d9]" />
    </div>
    {["left-[117px] top-[69px]", "left-[959px] top-[69px]", "left-[117px] top-[322px]", "left-[959px] top-[322px]"].map((c) => (
      <div key={c} className={`absolute ${c} w-[20px] h-[20px] rounded-full bg-white border-[3px] border-[#858585]`} />
    ))}
    <div className="absolute left-[988px] top-[79px] flex flex-col gap-[18px]">
      <div className="w-[49px] h-[49px] bg-white border border-[#c4c4c4] flex items-center justify-center">
        <svg width="20" height="20" viewBox="0 0 20 20"><path d="M7 0H13V7H20V13H13V20H7V13H0V7H7Z" fill="#5a9c82" /></svg>
      </div>
      <div className="w-[49px] h-[49px] bg-white border border-[#c4c4c4] flex items-center justify-center">
        <svg width="26" height="26" viewBox="0 0 26 26">
          <path d="M19 8L25 1V8L21 11Z" fill="#666" />
          <path d="M15 13L18 9L20 11L17 15Z" fill="#666" />
          <path d="M1 25C7 24 7 19 10 17C13 15 16 17 14 20C13 22 11 24 9 24Z" fill="#2e6fb5" />
          <circle cx="12" cy="18" r="3.500" fill="#fff" stroke="#2e6fb5" />
        </svg>
      </div>
      <div className="w-[49px] h-[49px] bg-white border border-[#c4c4c4] flex items-center justify-center">
        <svg width="30" height="30" viewBox="0 0 30 30"><path d="M0 1H30L18 15V30H12V15Z" fill="#6c6c6c" /><path d="M2 2L13 15V29" stroke="#cfcfcf" fill="none" /></svg>
      </div>
    </div>
  </div>
);

export default function App() {
  return (
    <div className="relative w-[1196px] h-[876px] overflow-hidden bg-white flex flex-col [font-family:'Noto_Sans_CJK_JP','Noto_Sans',sans-serif] [font-feature-settings:'palt']">
      <div className="h-[3px] bg-[#c9c9c9] shrink-0" />
      <Header />
      <Ribbon />
      <FormulaBar />
      <Sheet />
      <ShapesMenu />
      <div className="absolute left-[331px] top-[314px] w-[49px] h-[34px] bg-white border border-[#cfcfcf] flex items-center justify-center text-[20px] text-[#505050]">直線</div>
    </div>
  );
}
